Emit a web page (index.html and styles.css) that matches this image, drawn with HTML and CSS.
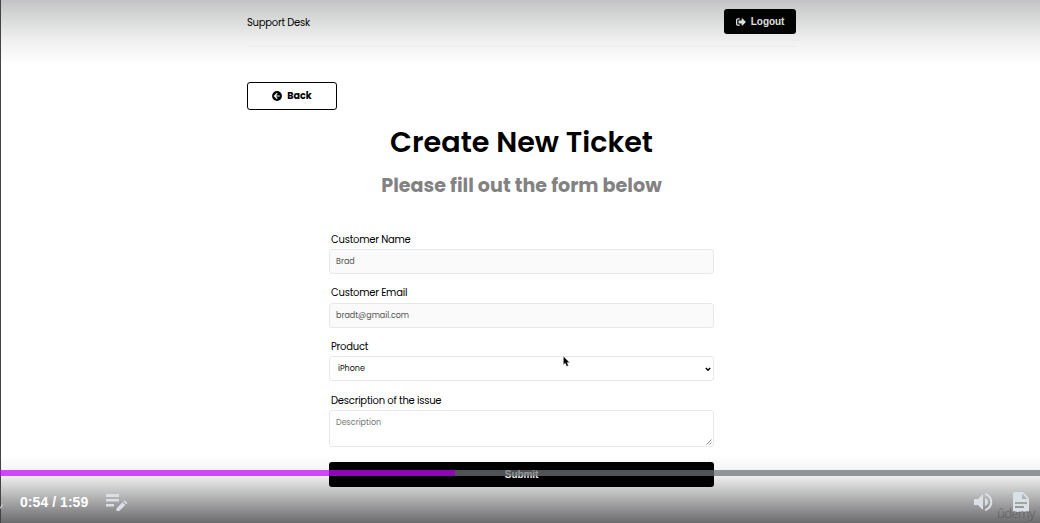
FILE: index.html
```html
<!DOCTYPE html>
<html lang="en">
<head>
<meta charset="utf-8">
<title>Support Desk</title>
<link rel="stylesheet" href="styles.css">
</head>
<body>
<main class="page">
  <header class="header">
    <span class="brand">Support Desk</span>
    <button class="logout">
      <svg width="10" height="10" viewBox="0 0 512 512"><path fill="currentColor" d="M497 273 329 441c-15 15-41 4.500-41-17v-96H152c-13 0-24-11-24-24v-96c0-13 11-24 24-24h136V88c0-21 26-32 41-17l168 168c9 9 9 25 0 34zM192 436v-40c0-7-5-12-12-12H96c-18 0-32-14-32-32V160c0-18 14-32 32-32h84c7 0 12-5 12-12V76c0-7-5-12-12-12H96c-53 0-96 43-96 96v192c0 53 43 96 96 96h84c7 0 12-5 12-12z"/></svg>
      Logout
    </button>
  </header>
  <a class="back">
    <svg width="10" height="10" viewBox="0 0 20 20"><circle cx="10" cy="10" r="9.800" fill="currentColor"/><path d="M10.500 4.500 5 10l5.500 5.500M5.500 10h10" fill="none" stroke="#fff" stroke-width="2.200"/></svg>
    <span>Back</span>
  </a>
  <section class="heading">
    <h1>Create New Ticket</h1>
    <p>Please fill out the form below</p>
  </section>
  <form class="form">
    <div class="group"><label>Customer Name</label><div class="control filled"><span>Brad</span></div></div>
    <div class="group"><label>Customer Email</label><div class="control filled"><span>bradt@gmail.com</span></div></div>
    <div class="group"><label>Product</label><div class="control select"><span>iPhone</span><svg width="6" height="5" viewBox="0 0 6 5"><path d="M.8 1 3 3.300 5.200 1" fill="none" stroke="#000" stroke-width="1.400"/></svg></div></div>
    <div class="group last"><label>Description of the issue</label><div class="control area"><span>Description</span><svg class="grip" width="6" height="6" viewBox="0 0 6 6"><path d="M.5 5.500l5-5M3.500 5.500l2-2" stroke="#777" stroke-width=".8"/></svg></div></div>
    <button class="submit" type="button">Submit</button>
  </form>
</main>

<div class="shade-top"></div>
<div class="shade-bottom"></div>
<div class="edge"></div>
<div class="progress"></div>
<div class="controls">
  <svg class="clip" width="4" height="8" viewBox="0 0 4 8"><path d="M0 5.500 3 1.500 2.500 4 0 7z" fill="#dde2e6"/></svg>
  <span class="time">0:54 / 1:59</span>
  <svg class="note" width="22" height="18" viewBox="0 0 22 18"><path fill="#d9dfe4" d="M0 0h13v3H0zM0 5h13v2.500H0zM0 10h8v2.500H0zM10.500 14.200l6-6 2.800 2.800-6 6h-2.800zM17.400 7.400l1.300-1.200 2.700 2.700-1.300 1.300z"/></svg>
  <span class="spacer"></span>
  <svg class="volume" width="19" height="18" viewBox="0 0 19 18"><path fill="#dae1e6" d="M0 6h4l5-5v16l-5-5H0zM11 5c2 .8 3 2.200 3 4s-1 3.200-3 4zM11 0c4.500 1 7.300 4.700 7.300 9s-2.800 8-7.300 9v-2c3.300-1 5.300-3.700 5.300-7S14.300 3 11 2z"/></svg>
  <svg class="doc" width="16" height="20" viewBox="0 0 16 20"><path fill="#dae1e6" fill-rule="evenodd" d="M2 0h8l6 6v12a2 2 0 0 1-2 2H2a2 2 0 0 1-2-2V2a2 2 0 0 1 2-2zm7 1.500V7h5.500zM2 10v2h12v-2zm0 4v2h9v-2z"/></svg>
</div>
<span class="watermark">ûdemy</span>
<svg class="cursor" width="7" height="11" viewBox="0 0 7 11"><path d="M.5.500v8l1.800-1.600L3.700 10.300l1.600-.7L3.900 6.400h2.500z" fill="#000" stroke="#aaa" stroke-width=".4"/></svg>
</body>
</html>
```
FILE: styles.css
```css
* { box-sizing: border-box; }
body {
  position: relative;
  width: 1040px;
  height: 523px;
  margin: 0;
  overflow: hidden;
  background: #fff;
  color: #000;
  font-family: Poppins, Inter, sans-serif;
}
svg { display: block; flex: none; }
button { border: 0; padding: 0; }
.page { width: 549px; margin-left: 247px; }
.header {
  display: flex;
  justify-content: space-between;
  align-items: flex-start;
  height: 47px;
  padding-top: 9px;
  border-bottom: 1px solid #f7f7f7;
}
.brand { font-size: 10px; line-height: 27px; letter-spacing: -.25px; }
.logout {
  display: flex;
  align-items: center;
  justify-content: center;
  gap: 5px;
  width: 72px;
  height: 25px;
  border-radius: 3px;
  background: #000;
  color: #fff;
  font: bold 10px "Liberation Sans", sans-serif;
  letter-spacing: -.1px;
}
.back {
  display: flex;
  align-items: center;
  justify-content: center;
  gap: 5px;
  width: 90px;
  height: 28px;
  margin-top: 35px;
  border: 1px solid #000;
  border-radius: 3px;
  font-size: 9.600px;
  font-weight: 700;
}
.heading { text-align: center; white-space: nowrap; }
.heading h1 { margin: 10px 0 0; font-size: 28.600px; font-weight: 600; line-height: 44px; }
.heading p { margin: 7px 0 0; color: #828282; font-size: 19.100px; font-weight: 700; line-height: 30px; }
.form { width: 385px; margin: 29.500px 0 0 82px; }
.group { height: 53.700px; }
.group label { display: block; width: max-content; height: 18.400px; padding-left: 2px; font-size: 10px; line-height: 17px; letter-spacing: -.23px; }
.control {
  display: flex;
  align-items: center;
  height: 25px;
  padding: 1px 6px 0;
  border: 1px solid #e8e8e8;
  border-radius: 3px;
  color: #555;
  font-size: 8px;
}
.filled { background: #fafafa; }
.select { justify-content: space-between; padding: 1px 2px 0 8px; color: #111; }
.last { height: 70.400px; }
.area { align-items: flex-start; justify-content: space-between; height: 37px; padding: 6px 1px 0 6px; color: #777; }
.grip { align-self: flex-end; margin-bottom: 1px; }
.submit {
  display: block;
  width: 385px;
  height: 25px;
  border-radius: 3px;
  background: #000;
  color: #fff;
  font: bold 10px "Liberation Sans", sans-serif;
  letter-spacing: -.1px;
}
.shade-top, .shade-bottom, .progress, .controls, .edge, .watermark, .cursor { position: absolute; pointer-events: none; }
.shade-top { inset: 0 0 auto; height: 66px; background: linear-gradient(rgba(5,5,12,.24), rgba(10,20,15,.15) 32%, rgba(0,0,0,.055) 65%, transparent); }
.shade-bottom { left: 0; right: 0; top: 455px; height: 68px; background: linear-gradient(rgba(0,0,0,0), rgba(0,0,0,.06) 30%, rgba(0,3,4,.25) 56%, rgba(0,0,4,.43) 80%, rgba(0,0,6,.58)); }
.edge { left: 0; top: 0; width: 1px; height: 523px; background: #454246; }
.progress { left: 0; top: 470px; width: 1040px; height: 6px; background: linear-gradient(90deg, rgba(190,10,245,.73) 455px, rgba(108,114,118,.73) 455px); }
.controls { left: 0; top: 480px; width: 1040px; height: 43px; display: flex; align-items: center; padding-right: 11px; }
.clip { margin-top: 9px; }
.time { margin: 0 0 0 16px; width: 68px; color: #fff; font: bold 14px "Liberation Sans", sans-serif; letter-spacing: .05px; white-space: nowrap; }
.note { margin: 3px 0 0 18px; }
.spacer { flex: 1; }
.volume { margin-right: 20px; }
.watermark { left: 997px; top: 505px; color: rgba(75,75,78,.5); font: 13px/16px "Open Sans", sans-serif; letter-spacing: -.8px; }
.cursor { left: 563px; top: 356px; }
```
